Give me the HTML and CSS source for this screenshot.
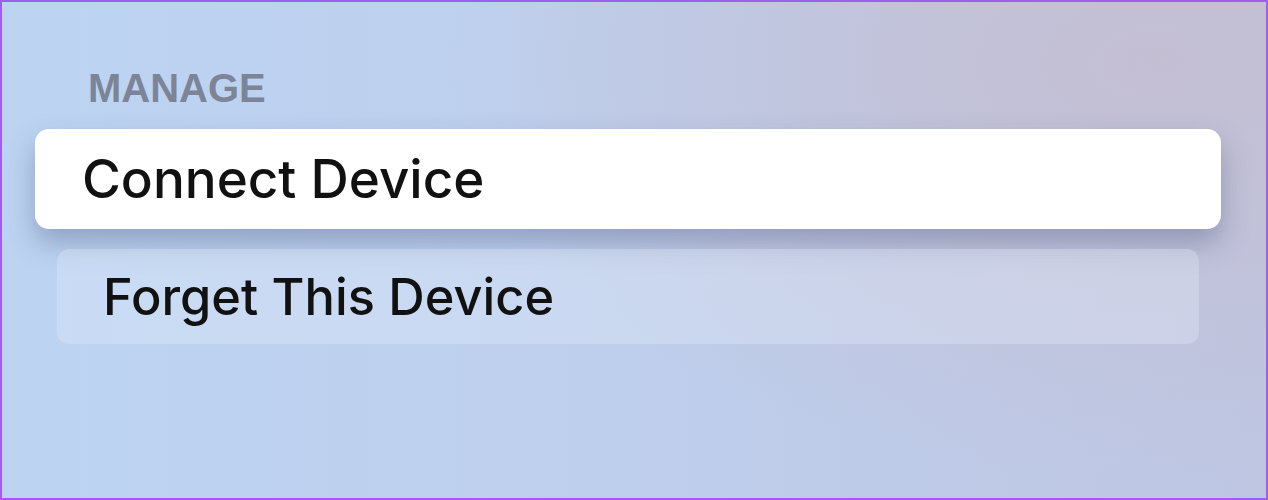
FILE: index.html
```html
<!DOCTYPE html>
<html lang="en">
<head>
    <meta charset="UTF-8">
    <meta name="viewport" content="width=device-width, initial-scale=1.0">
    <title>Manage</title>
    <link rel="stylesheet" href="styles.css">
</head>
<body>
    <div class="screen">
        <div class="section-title">MANAGE</div>

        <div class="menu">
            <div class="menu-item focused">Connect Device</div>
            <div class="menu-item">Forget This Device</div>
        </div>
    </div>
</body>
</html>
```

FILE: styles.css
```css
body {
    margin: 0;
    font-family: 'Inter', 'Liberation Sans', sans-serif;
}

.screen {
    box-sizing: border-box;
    width: 1268px;
    height: 500px;
    border: 2px solid #a25cf4;
    background-color: #bfd0ec;
    background-image:
        radial-gradient(ellipse 700px 420px at 1150px 60px, rgba(196, 190, 210, 0.95), rgba(196, 190, 210, 0) 100%),
        linear-gradient(90deg, #bcd4f2 0%, #bed0ee 40%, #bec6e2 100%);
    padding: 62px 0 0 0;
}

.section-title {
    font-family: 'Liberation Sans', sans-serif;
    font-weight: bold;
    font-size: 40px;
    line-height: 48px;
    color: #7b8597;
    padding-left: 86px;
}

.menu {
    margin-top: 17px;
}

.menu-item {
    display: flex;
    align-items: center;
    color: #111;
    font-weight: 500;
    box-sizing: border-box;
}

.menu-item.focused {
    margin: 0 45px 0 33px;
    height: 100px;
    padding-left: 47px;
    font-size: 53px;
    background-color: #fff;
    border-radius: 14px;
    box-shadow: 0 14px 28px rgba(70, 82, 120, 0.38);
}

.menu-item:not(.focused) {
    margin: 20px 67px 0 55px;
    height: 95px;
    padding-left: 46px;
    font-size: 50.5px;
    background-color: rgba(226, 234, 250, 0.35);
    border-radius: 12px;
}
```
